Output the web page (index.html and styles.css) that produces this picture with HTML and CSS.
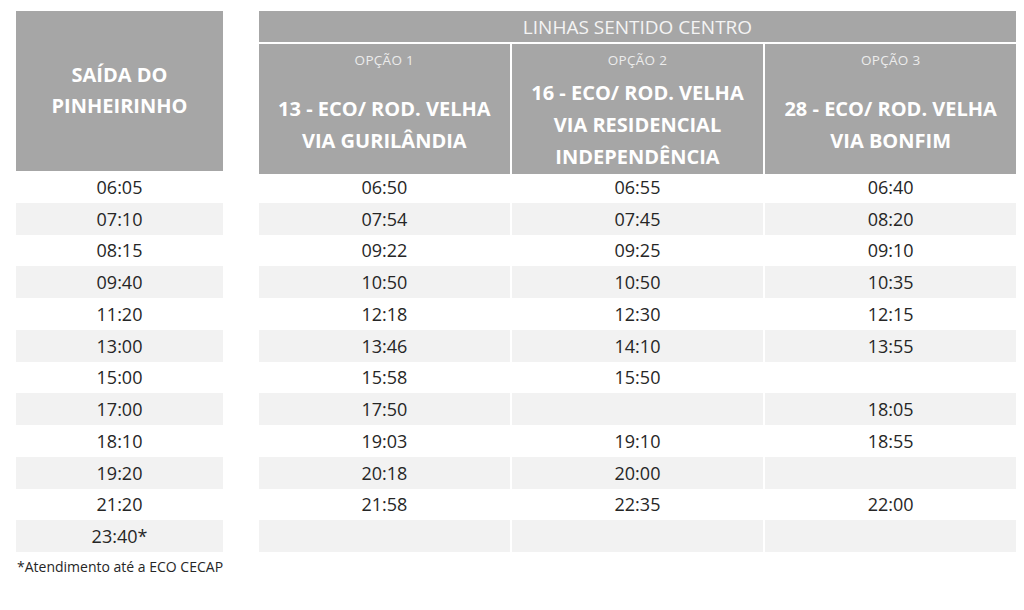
FILE: index.html
```html
<!DOCTYPE html>
<html lang="pt-BR">
<head>
<meta charset="utf-8">
<title>Horários</title>
<link rel="stylesheet" href="styles.css">
</head>
<body>
<div class="page">
  <section class="left">
    <div class="head left-head">SAÍDA DO<br>PINHEIRINHO</div>
    <div class="rows one">
      <div class="cell">06:05</div>
      <div class="cell alt">07:10</div>
      <div class="cell">08:15</div>
      <div class="cell alt">09:40</div>
      <div class="cell">11:20</div>
      <div class="cell alt">13:00</div>
      <div class="cell">15:00</div>
      <div class="cell alt">17:00</div>
      <div class="cell">18:10</div>
      <div class="cell alt">19:20</div>
      <div class="cell">21:20</div>
      <div class="cell alt">23:40*</div>
    </div>
    <p class="note">*Atendimento até a ECO CECAP</p>
  </section>
  <section class="right">
    <div class="head top-head">LINHAS SENTIDO CENTRO</div>
    <div class="opts">
      <div class="head opt">
        <div class="opt-label">OPÇÃO 1</div>
        <div class="opt-title">13 - ECO/ ROD. VELHA<br>VIA GURILÂNDIA</div>
      </div>
      <div class="head opt">
        <div class="opt-label">OPÇÃO 2</div>
        <div class="opt-title">16 - ECO/ ROD. VELHA<br>VIA RESIDENCIAL<br>INDEPENDÊNCIA</div>
      </div>
      <div class="head opt">
        <div class="opt-label">OPÇÃO 3</div>
        <div class="opt-title">28 - ECO/ ROD. VELHA<br>VIA BONFIM</div>
      </div>
    </div>
    <div class="rows three">
      <div class="cell">06:50</div><div class="cell">06:55</div><div class="cell">06:40</div>
      <div class="cell alt">07:54</div><div class="cell alt">07:45</div><div class="cell alt">08:20</div>
      <div class="cell">09:22</div><div class="cell">09:25</div><div class="cell">09:10</div>
      <div class="cell alt">10:50</div><div class="cell alt">10:50</div><div class="cell alt">10:35</div>
      <div class="cell">12:18</div><div class="cell">12:30</div><div class="cell">12:15</div>
      <div class="cell alt">13:46</div><div class="cell alt">14:10</div><div class="cell alt">13:55</div>
      <div class="cell">15:58</div><div class="cell">15:50</div><div class="cell"></div>
      <div class="cell alt">17:50</div><div class="cell alt"></div><div class="cell alt">18:05</div>
      <div class="cell">19:03</div><div class="cell">19:10</div><div class="cell">18:55</div>
      <div class="cell alt">20:18</div><div class="cell alt">20:00</div><div class="cell alt"></div>
      <div class="cell">21:58</div><div class="cell">22:35</div><div class="cell">22:00</div>
      <div class="cell alt"></div><div class="cell alt"></div><div class="cell alt"></div>
    </div>
  </section>
</div>
</body>
</html>
```

FILE: styles.css
```css
* { box-sizing: border-box; }

html, body {
  margin: 0;
  background: #ffffff;
}

body {
  font-family: "Open Sans", "Noto Sans", "Liberation Sans", sans-serif;
  color: #262626;
}

.page {
  display: flex;
  align-items: flex-start;
  gap: 36px;
  padding: 11px 0 0 16px;
}

.left {
  width: 207px;
  display: flex;
  flex-direction: column;
}

.right {
  width: 757px;
  display: flex;
  flex-direction: column;
}

.head {
  background: #a6a6a6;
  color: #ffffff;
}

.left-head {
  height: 160px;
  display: flex;
  align-items: center;
  justify-content: center;
  text-align: center;
  font-weight: 700;
  font-size: 20px;
  line-height: 31px;
  padding-bottom: 3px;
}

.top-head {
  height: 31px;
  display: flex;
  align-items: center;
  justify-content: center;
  font-size: 19px;
  color: #f4f4f4;
  margin-bottom: 2px;
}

.opts {
  display: grid;
  grid-template-columns: repeat(3, 1fr);
  column-gap: 2.5px;
  height: 127px;
}

.opt {
  display: flex;
  flex-direction: column;
}

.opt-label {
  height: 33px;
  line-height: 33px;
  text-align: center;
  font-size: 13.5px;
  letter-spacing: 0.3px;
  color: #ececec;
}

.opt-title {
  flex: 1;
  display: flex;
  align-items: center;
  justify-content: center;
  text-align: center;
  font-weight: 700;
  font-size: 20px;
  line-height: 32px;
  padding-bottom: 1px;
}

.rows {
  display: grid;
  grid-auto-rows: 31.75px;
}

.rows.one {
  grid-template-columns: 1fr;
}

.rows.three {
  grid-template-columns: repeat(3, 1fr);
  column-gap: 2.5px;
}

.cell {
  display: flex;
  align-items: center;
  justify-content: center;
  font-size: 18px;
  color: #262626;
}

.cell.alt {
  background: #f2f2f2;
}

.note {
  margin: 6px 0 0 1px;
  font-size: 14px;
  line-height: 18px;
  white-space: nowrap;
  color: #262626;
}
```
